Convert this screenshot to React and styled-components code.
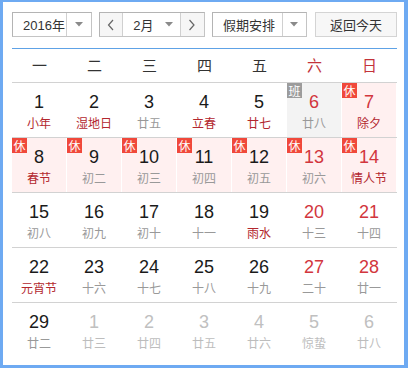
import React from "react";
import styled, { createGlobalStyle } from "styled-components";

const GlobalStyle = createGlobalStyle`
  body {
    margin: 0;
    background: #fff;
    font-family: "Liberation Sans", "Noto Sans CJK SC", sans-serif;
  }
`;

const WEEK = ["一", "二", "三", "四", "五", "六", "日"];

// fest: lunar text in red; off: next month; tag: 休 / 班
const DAYS = [
  [
    { n: 1, l: "小年", fest: true },
    { n: 2, l: "湿地日", fest: true },
    { n: 3, l: "廿五" },
    { n: 4, l: "立春", fest: true },
    { n: 5, l: "廿七", fest: true },
    { n: 6, l: "廿八", tag: "班", red: true },
    { n: 7, l: "除夕", fest: true, tag: "休", red: true },
  ],
  [
    { n: 8, l: "春节", fest: true, tag: "休" },
    { n: 9, l: "初二", tag: "休" },
    { n: 10, l: "初三", tag: "休" },
    { n: 11, l: "初四", tag: "休" },
    { n: 12, l: "初五", tag: "休" },
    { n: 13, l: "初六", tag: "休", red: true },
    { n: 14, l: "情人节", fest: true, tag: "休", red: true },
  ],
  [
    { n: 15, l: "初八" },
    { n: 16, l: "初九" },
    { n: 17, l: "初十" },
    { n: 18, l: "十一" },
    { n: 19, l: "雨水", fest: true },
    { n: 20, l: "十三", red: true },
    { n: 21, l: "十四", red: true },
  ],
  [
    { n: 22, l: "元宵节", fest: true },
    { n: 23, l: "十六" },
    { n: 24, l: "十七" },
    { n: 25, l: "十八" },
    { n: 26, l: "十九" },
    { n: 27, l: "二十", red: true },
    { n: 28, l: "廿一", red: true },
  ],
  [
    { n: 29, l: "廿二" },
    { n: 1, l: "廿三", off: true },
    { n: 2, l: "廿四", off: true },
    { n: 3, l: "廿五", off: true },
    { n: 4, l: "廿六", off: true },
    { n: 5, l: "惊蛰", off: true },
    { n: 6, l: "廿八", off: true },
  ],
];

function Caret() {
  return (
    <svg width="8" height="5" viewBox="0 0 8 5">
      <path d="M0 0 L8 0 L4 4.5 Z" fill="#8a8a8a" />
    </svg>
  );
}

function Chevron({ dir }) {
  const d = dir === "left" ? "M6 1 L1.5 6 L6 11" : "M1.5 1 L6 6 L1.5 11";
  return (
    <svg width="8" height="12" viewBox="0 0 8 12">
      <path d={d} fill="none" stroke="#666" strokeWidth="1.2" />
    </svg>
  );
}

function App() {
  return (
    <>
      <GlobalStyle />
      <Frame>
        <Toolbar>
          <Box $w={80}>
            <Label $w={55}>2016年</Label>
            <Part $w={25}>
              <Caret />
            </Part>
          </Box>
          <Box $w={106}>
            <Part $w={23} $gray>
              <Chevron dir="left" />
            </Part>
            <Label $w={59} $split>
              <span>2月</span>
              <Caret />
            </Label>
            <Part $w={24} $gray>
              <Chevron dir="right" />
            </Part>
          </Box>
          <Box $w={95}>
            <Label $w={71}>假期安排</Label>
            <Part $w={24}>
              <Caret />
            </Part>
          </Box>
          <TodayButton>返回今天</TodayButton>
        </Toolbar>

        <WeekHeader>
          {WEEK.map((w, i) => (
            <WeekDay key={w} $red={i >= 5}>
              {w}
            </WeekDay>
          ))}
        </WeekHeader>

        {DAYS.map((row, r) => (
          <Row key={r} $last={r === DAYS.length - 1}>
            {row.map((d, c) => (
              <Cell key={c} $tag={d.tag}>
                {d.tag && <Badge $tag={d.tag}>{d.tag}</Badge>}
                <Num $red={d.red} $off={d.off}>
                  {d.n}
                </Num>
                <Lunar $fest={d.fest} $off={d.off}>
                  {d.l}
                </Lunar>
              </Cell>
            ))}
          </Row>
        ))}
      </Frame>
    </>
  );
}

export default App;

const Frame = styled.div`
  width: 408px;
  height: 368px;
  box-sizing: border-box;
  border-style: solid;
  border-color: #6eaaf2;
  border-width: 2px 4px 3px 3px;
  background: #fff;
  padding: 10px 7px 0 9px;
`;

const Toolbar = styled.div`
  display: flex;
  height: 25px;
  gap: 7px;
`;

const Box = styled.div`
  display: flex;
  width: ${(p) => p.$w}px;
  box-sizing: border-box;
  border: 1px solid #c4c4c4;
  border-top-color: #b4b4b4;
  border-left-color: #b4b4b4;
  background: #fff;
`;

const Label = styled.div`
  width: ${(p) => p.$w}px;
  display: flex;
  align-items: center;
  justify-content: ${(p) => (p.$split ? "space-between" : "flex-start")};
  padding: 0 ${(p) => (p.$split ? "7px" : "0")} 0 10px;
  box-sizing: border-box;
  font-size: 13px;
  color: #333;
  border-right: 1px solid #d0d0d0;
`;

const Part = styled.div`
  width: ${(p) => p.$w}px;
  display: flex;
  align-items: center;
  justify-content: center;
  background: ${(p) => (p.$gray ? "#f6f6f6" : "#fff")};
  &:first-child {
    border-right: 1px solid #d0d0d0;
  }
`;

const TodayButton = styled.div`
  margin-left: 1px;
  width: 82px;
  box-sizing: border-box;
  border: 1px solid #d4d4d4;
  background: #f7f7f7;
  display: flex;
  align-items: center;
  justify-content: center;
  font-size: 13px;
  color: #333;
`;

const WeekHeader = styled.div`
  margin-top: 11px;
  display: grid;
  grid-template-columns: repeat(7, 55px);
  border-top: 1px solid #5ea2e6;
  border-bottom: 1px solid #d2d2d2;
  height: 35px;
  box-sizing: border-box;
`;

const WeekDay = styled.div`
  text-align: center;
  line-height: 31px;
  font-size: 15px;
  font-family: "Noto Sans CJK SC", sans-serif;
  color: ${(p) => (p.$red ? "#c3333a" : "#333")};
`;

const Row = styled.div`
  display: grid;
  grid-template-columns: repeat(7, 55px);
  height: 55px;
  box-sizing: border-box;
  border-bottom: ${(p) => (p.$last ? "none" : "1px solid #d2d2d2")};
`;

const Cell = styled.div`
  position: relative;
  text-align: center;
  padding-top: 10px;
  border-right: 1px solid #fff;
  background: ${(p) =>
    p.$tag === "休" ? "#fff0f0" : p.$tag === "班" ? "#f3f3f3" : "#fff"};
`;

const Badge = styled.span`
  position: absolute;
  top: 0;
  left: 0;
  width: 15px;
  height: 15px;
  line-height: 15px;
  font-size: 12px;
  font-family: "Noto Sans CJK SC", sans-serif;
  color: #fff;
  text-align: center;
  background: ${(p) => (p.$tag === "休" ? "#f0483b" : "#9c9c9c")};
`;

const Num = styled.div`
  font-size: 18px;
  line-height: 18px;
  color: ${(p) => (p.$off ? "#c0c0c0" : p.$red ? "#d2363d" : "#1a1a1a")};
`;

const Lunar = styled.div`
  margin-top: 4px;
  font-size: 12px;
  line-height: 16px;
  font-family: "Noto Sans CJK SC", sans-serif;
  color: ${(p) => (p.$off ? "#bdbdbd" : p.$fest ? "#b3272e" : "#999")};
`;
